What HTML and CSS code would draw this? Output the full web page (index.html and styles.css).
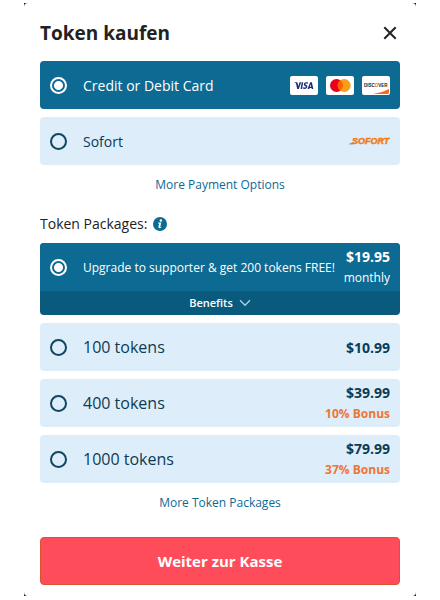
FILE: index.html
```
<!DOCTYPE html>
<html lang="de">
<head>
<meta charset="utf-8">
<meta name="viewport" content="width=device-width, initial-scale=1">
<title>Token kaufen</title>
<link rel="stylesheet" href="styles.css">
</head>
<body>
<main class="backdrop">
<form class="dialog">
  <header class="header">
    <h1 class="title">Token kaufen</h1>
    <button class="close" type="button" aria-label="Close">
      <svg width="14" height="14" viewBox="0 0 14 14"><path d="M1.3 1.3l11.4 11.4M12.7 1.3L1.3 12.7" fill="none" stroke="#222" stroke-width="2"/></svg>
    </button>
  </header>

  <div class="options">
    <label class="option selected">
      <input class="radio" type="radio" name="payment" checked>
      <span class="method">Credit or Debit Card</span>
      <span class="cards">
        <svg width="28" height="19" viewBox="0 0 28 19"><rect width="28" height="19" rx="2" fill="#fff"/><g fill="#1a2a7c"><path d="M4.5 6.3h2.3q.7 0 .8.7l.6 3.2 1.4-3.9h1.6L8.8 12.9H7.2L6 7.5Q5.5 6.9 4.5 6.6z"/><path d="M11.7 6.3h1.5l-1.1 6.6h-1.5z"/><path d="M18 6.500l-.3 1.300q-2.300-.8-2.500.2c0 .8 2.300.8 2.200 2.600-.2 2.500-2.800 2.700-4.500 2l.3-1.400q2.400.9 2.700-.3c0-.8-2.200-.9-2.100-2.600.2-2 2.300-2.500 4.200-1.800z"/><path fill-rule="evenodd" d="M20.200 6.300h1.700l1.400 6.600h-1.500l-.2-.9h-2l-.5.9h-1.600zM20.700 8.300l-.9 2.400h1.400z"/></g></svg>
        <svg width="28" height="19" viewBox="0 0 28 19"><rect width="28" height="19" rx="2" fill="#fff"/><circle cx="10.500" cy="9.500" r="6.500" fill="#eb001b"/><circle cx="18.200" cy="9.500" r="6.500" fill="#f79e1b"/><path d="M14.350 4.300a6.500 6.500 0 0 1 0 10.400a6.500 6.500 0 0 1 0-10.400z" fill="#ff5f00"/></svg>
        <svg width="28" height="19" viewBox="0 0 56 38"><rect width="56" height="38" rx="4" fill="#fff"/><path d="M22 36q18-2.400 32-10v7q0 3-3 3z" fill="#f26e21"/><text class="discover" x="4" y="22" fill="#222">DISC<tspan fill="#f26e21">O</tspan>VER</text></svg>
      </span>
    </label>
    <label class="option">
      <input class="radio" type="radio" name="payment">
      <span class="method">Sofort</span>
      <svg width="41" height="12" viewBox="0 0 41 12"><path d="M1 8h4l-.6 1.500H0z" fill="#999"/><text class="sofort" x="3" y="9" fill="#ef7d1a" stroke="#ef7d1a" stroke-width=".5">SOFORT</text></svg>
    </label>
  </div>
  <a class="more" href="#payment">More Payment Options</a>

  <h2 class="section">Token Packages:
    <svg width="14" height="14" viewBox="0 0 14 14"><circle cx="7" cy="7" r="7" fill="#0c6a93"/><circle cx="7.900" cy="3.500" r="1.200" fill="#fff"/><path d="M5.200 5.600h3.100L7.200 9.800q0 .5 1.200-.2l-.3.900q-2.900 1.500-2.700-.5l.8-3.400h-1.200z" fill="#fff"/></svg>
  </h2>
  <div class="options">
    <div class="package">
      <label class="option selected">
        <input class="radio" type="radio" name="package" checked>
        <span class="offer">Upgrade to supporter &amp; get 200 tokens FREE!</span>
        <span class="cost"><strong class="price">$19.95</strong><span class="period">monthly</span></span>
      </label>
      <button class="benefits" type="button">Benefits
        <svg width="12" height="8" viewBox="0 0 12 8"><path d="M1 1.300l5 5 5-5" fill="none" stroke="#9fd0e8" stroke-width="1.500"/></svg>
      </button>
    </div>
    <label class="option">
      <input class="radio" type="radio" name="package">
      <span class="amount">100 tokens</span>
      <span class="cost"><strong class="price">$10.99</strong></span>
    </label>
    <label class="option">
      <input class="radio" type="radio" name="package">
      <span class="amount">400 tokens</span>
      <span class="cost"><strong class="price">$39.99</strong><span class="bonus">10% Bonus</span></span>
    </label>
    <label class="option">
      <input class="radio" type="radio" name="package">
      <span class="amount">1000 tokens</span>
      <span class="cost"><strong class="price">$79.99</strong><span class="bonus">37% Bonus</span></span>
    </label>
  </div>
  <a class="more" href="#packages">More Token Packages</a>
  <button class="submit" type="submit">Weiter zur Kasse</button>
</form>
</main>
</body>
</html>
```
FILE: styles.css
```
* {
  box-sizing: border-box;
}

body {
  margin: 0;
  background: #fff;
  color: #222;
  font-family: "Open Sans", "Noto Sans", sans-serif;
  font-size: 14px;
}

button {
  border: 0;
  font-family: inherit;
  cursor: pointer;
}

svg {
  display: block;
  flex: none;
}

.backdrop {
  margin: 3px 24px;
  background: #222;
}

.dialog {
  display: flex;
  flex-direction: column;
  padding: 0 16px 11px;
  border-radius: 4px;
  background: #fff;
}

.header {
  display: flex;
  align-items: center;
  justify-content: space-between;
  padding: 18px 0 16px;
}

.title {
  margin: 0;
  font-size: 19px;
  line-height: 24px;
}

.close {
  padding: 3px;
  background: none;
}

.options {
  display: flex;
  flex-direction: column;
  gap: 8px;
}

.option {
  display: flex;
  align-items: center;
  min-height: 48px;
  padding: 0 10px;
  border-radius: 4px;
  background: #deedfa;
  color: #0b3c54;
}

.selected {
  background: #0c6a93;
  color: #fff;
}

.radio {
  appearance: none;
  flex: none;
  width: 17px;
  height: 17px;
  margin: 0 16px 0 0;
  border: 2px solid #0f4660;
  border-radius: 50%;
}

.radio:checked {
  border-color: #fff;
  background: radial-gradient(circle, #fff 4px, transparent 5px);
}

.method,
.amount,
.offer {
  flex: 1;
}

.amount {
  font-size: 16px;
}

.offer {
  font-size: 12px;
  white-space: nowrap;
}

.cards {
  display: flex;
  gap: 8px;
}

.discover {
  font: bold 9px "Liberation Sans", sans-serif;
}

.sofort {
  font: italic bold 9px "Liberation Sans", sans-serif;
}

.more {
  align-self: center;
  color: #0c6a93;
  font-size: 12px;
  line-height: 40px;
  text-decoration: none;
}

.section {
  display: flex;
  align-items: center;
  gap: 6px;
  margin: 0;
  font-size: 14px;
  font-weight: 400;
  line-height: 38px;
}

.package {
  overflow: hidden;
  border-radius: 4px;
  background: #095a7d;
}

.package .option {
  border-radius: 0;
}

.cost {
  display: flex;
  flex-direction: column;
  align-items: flex-end;
  line-height: 21px;
}

.price {
  font-size: 14px;
}

.period,
.bonus {
  font-size: 12px;
}

.bonus {
  color: #ed7632;
  font-weight: 700;
}

.benefits {
  display: flex;
  align-items: center;
  justify-content: center;
  gap: 6px;
  width: 100%;
  padding: 0;
  background: none;
  color: #fff;
  font-size: 11px;
  font-weight: 600;
  line-height: 24px;
}

.submit {
  margin-top: 14px;
  padding: 0;
  border: 1px solid #d9532f;
  border-radius: 4px;
  background: #ff4c5b;
  color: #fff;
  font-size: 15px;
  font-weight: 700;
  line-height: 46px;
}
```
